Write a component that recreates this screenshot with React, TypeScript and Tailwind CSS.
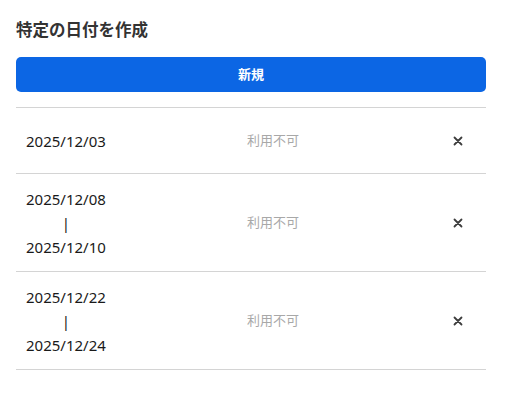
const rows = [
  { from: "2025/12/03" },
  { from: "2025/12/08", to: "2025/12/10" },
  { from: "2025/12/22", to: "2025/12/24" },
];

function CloseIcon() {
  return (
    <svg width="10" height="10" viewBox="0 0 10 10" fill="none">
      <path d="M1.5 1.5L8.5 8.5M8.5 1.5L1.5 8.5" stroke="#3d3d3d" strokeWidth="1.8" strokeLinecap="round" />
    </svg>
  );
}

export default function App() {
  return (
    <div className="min-h-[403px] w-[510px] bg-white pl-4 pr-6 pt-[18px] font-['Noto_Sans','Noto_Sans_CJK_JP',sans-serif]">
      {/* Title */}
      <h1 className="text-[16.5px] font-bold leading-6 text-[#333333]">
        特定の日付を作成
      </h1>

      {/* New button */}
      <button className="mt-[15px] flex h-[35px] w-full items-center justify-center rounded-[5px] bg-[#0c66e4] text-[13px] font-bold text-white">
        新規
      </button>

      {/* Date list */}
      <div className="mt-[15px] border-t border-[#d4d4d4]">
        {rows.map((row) => (
          <div
            key={row.from}
            className="flex min-h-[66px] items-center border-b border-[#d4d4d4] pb-[12px] pl-[10px] pr-[18px] pt-[13px]"
          >
            <div className="flex w-[221px] shrink-0">
              <div className="flex flex-col items-center text-[15px] leading-6 text-[#1a1a1a]">
                <span>{row.from}</span>
                {row.to && (
                  <>
                    <span>|</span>
                    <span>{row.to}</span>
                  </>
                )}
              </div>
            </div>
            <span className="text-[13px] text-[#a8a8a8]">利用不可</span>
            <div className="flex flex-1 justify-end">
              <button className="flex h-5 w-5 items-center justify-center">
                <CloseIcon />
              </button>
            </div>
          </div>
        ))}
      </div>
    </div>
  );
}
